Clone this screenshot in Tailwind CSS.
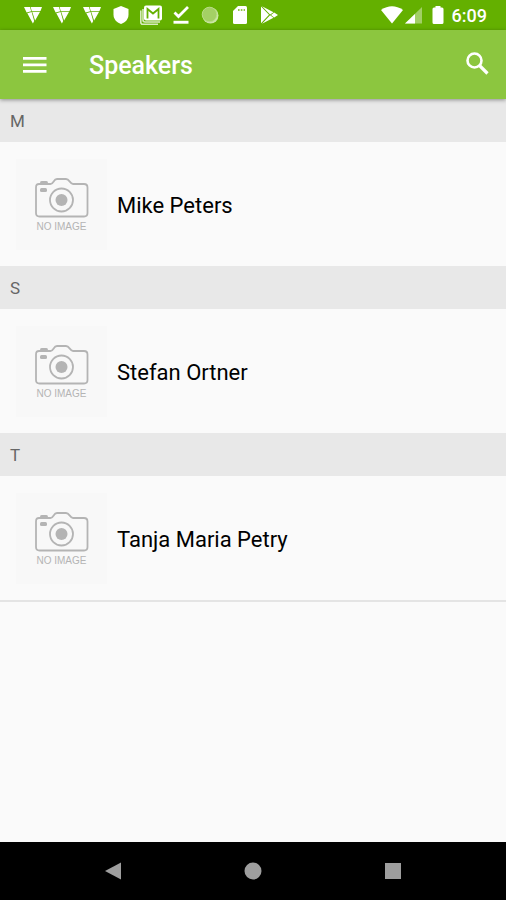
<!DOCTYPE html>
<html lang="en">
<head>
<meta charset="utf-8">
<meta name="viewport" content="width=device-width, initial-scale=1">
<title>Speakers</title>
<script src="https://cdn.jsdelivr.net/npm/@tailwindcss/browser@4"></script>
</head>
<body class="flex min-h-screen flex-col bg-[#fafafa] font-['Roboto',sans-serif] text-black">
<svg class="hidden" aria-hidden="true">
  <symbol id="vee" viewBox="0 0 18 18">
    <path fill="#fff" d="M0 1h6l1.200 4.300-4.600 1.200zM6.700 1H18l-1.500 3.900-8.700.3zM3.300 7.200l4.300-1.300 2.600 9.200-1.300 2.400zM8.300 6l7.800-.3-5 8.900z"/>
  </symbol>
  <symbol id="camera" viewBox="0 0 54 40">
    <g fill="none" stroke="#b4b4b4" stroke-width="1.800">
      <path d="M4 6H15.500C18.500 6 18.500 1 22 1H31C34.500 1 35 6 38 6H49Q52.500 6 52.500 9.500V35Q52.500 38.500 49 38.500H4.500Q1 38.500 1 35V9.500Q1 6 4 6Z"/>
      <path d="M6 5.500V4.500Q6 4 7 4H11Q12 4 12 4.500V5.500"/>
      <circle cx="26.500" cy="22" r="11.500"/>
    </g>
    <circle cx="26.500" cy="22" r="6" fill="#b4b4b4"/>
    <rect x="5" y="10" width="7" height="4" rx="1.500" fill="#b4b4b4"/>
  </symbol>
</svg>

<div class="flex h-[30px] shrink-0 items-center justify-between bg-[#64b000] pr-[19px] pl-[18px] text-white">
  <div class="grid w-[266px] grid-cols-9 place-items-center">
    <svg class="size-[18px]"><use href="#vee"/></svg>
    <svg class="size-[18px]"><use href="#vee"/></svg>
    <svg class="size-[18px]"><use href="#vee"/></svg>
    <svg class="size-[18px]" viewBox="0 0 18 18"><path fill="#fff" d="M9 0l7.500 3v5.500c0 4.500-3 8-7.500 9.500-4.500-1.500-7.500-5-7.500-9.500V3z"/></svg>
    <svg class="h-5 w-6" viewBox="0 0 24 20"><g fill="none" stroke="#fff" stroke-opacity=".75" stroke-width="1.600"><path d="M1.800 5.500v11.700q0 2 2 2H19M4 4v11q0 2 2 2H21"/></g><rect x="5" y=".5" width="18" height="15" rx="2" fill="#fff"/><path fill="none" stroke="#64b000" stroke-width="1.800" d="M8.500 13.500V4L14 8.500 19.500 4V13.500"/></svg>
    <svg class="size-[18px]" viewBox="0 0 18 18"><path fill="none" stroke="#fff" stroke-width="2.800" d="M2.500 6.500l4 4L16 1"/><path fill="#fff" d="M1.500 14.800h15v2.900h-15z"/></svg>
    <svg class="size-[18px]" viewBox="0 0 18 18"><circle cx="9.500" cy="9.500" r="8" fill="#cbe6a4"/><circle cx="8.500" cy="8.500" r="7.300" fill="#a4d065" stroke="#b9dc86" stroke-width="1"/></svg>
    <svg class="size-[18px]" viewBox="0 0 18 18"><path fill="#fff" d="M7 0h7.500Q16 0 16 1.500v15q0 1.500-1.500 1.500h-11Q2 18 2 16.500V5z"/><path fill="#64b000" fill-opacity=".7" d="M7 3h1.600v2H7zM9.800 3h1.600v2H9.800zM12.600 3h1.400v2h-1.400z"/></svg>
    <svg class="size-[18px]" viewBox="0 0 18 18"><path fill="#fff" d="M1 .5l8 8.300L1 17.300zM2 .3l11.500 5.900-3.400 2.300zM2 17.700l8.100-8.400 3.400 2.500zM14.200 6.500L18 9l-3.800 2.500L11 9z"/></svg>
  </div>
  <div class="flex items-center">
    <svg class="h-[18px] w-[22px]" viewBox="0 0 22 18"><path fill="#fff" d="M0 4Q11-3.500 22 4L11 17.500z"/></svg>
    <svg class="ml-0.5 size-[18px]" viewBox="0 0 18 18"><path fill="#fff" fill-opacity=".4" d="M17 1v16.500H0z"/><path fill="#fff" d="M10 8v9.500H0z"/></svg>
    <svg class="ml-[9px] h-[18px] w-3" viewBox="0 0 12 18"><path fill="#fff" d="M3.500 0h5v1.500H10q1.500 0 1.500 1.500v13.500q0 1.500-1.500 1.500H2Q.5 18 .5 16.500V3Q.5 1.500 2 1.500h1.500z"/></svg>
    <time class="ml-2 pt-0.5 text-[18px] leading-7 font-medium">6:09</time>
  </div>
</div>

<header class="relative z-10 flex h-[69px] shrink-0 items-center bg-[#8cc63f] pr-[17px] pl-[23px] text-white shadow-[0_1px_4px_rgba(0,0,0,0.4)]">
  <button type="button" aria-label="Open menu" class="shrink-0">
    <svg class="block h-[18px] w-6" viewBox="0 0 24 18"><path fill="#fff" d="M0 1h23.500v2.700H0zM0 7.500h23.500v2.700H0zM0 14h23.500v2.700H0z"/></svg>
  </button>
  <h1 class="ml-[42px] flex-1 pt-0.5 text-[25px] leading-8 font-medium">Speakers</h1>
  <button type="button" aria-label="Search" class="shrink-0 pb-0.5">
    <svg class="block h-[23px] w-[23px]" viewBox="0 0 23 23"><circle cx="8.500" cy="8.500" r="7" fill="none" stroke="#fff" stroke-width="2.600"/><path stroke="#fff" stroke-width="3.200" d="M13.500 13.500l8 8"/></svg>
  </button>
</header>

<main class="flex-1">
  <section>
    <h2 class="h-[43px] bg-[#e8e8e8] pl-[10px] text-[17px] leading-[45px] text-[#666]">M</h2>
    <a href="#mike-peters" class="flex h-[124px] items-center gap-[10px] pl-4">
      <span class="flex size-[91px] shrink-0 flex-col items-center bg-[#f8f8f8] pt-[19px]">
        <svg class="h-10 w-[54px]"><use href="#camera"/></svg>
        <span class="mt-[3px] font-['Liberation_Sans',sans-serif] text-[10px] leading-3 text-[#b4b4b4]">NO IMAGE</span>
      </span>
      <span class="pt-1 text-[22px] leading-7">Mike Peters</span>
    </a>
  </section>
  <section>
    <h2 class="h-[43px] bg-[#e8e8e8] pl-[10px] text-[17px] leading-[45px] text-[#666]">S</h2>
    <a href="#stefan-ortner" class="flex h-[124px] items-center gap-[10px] pl-4">
      <span class="flex size-[91px] shrink-0 flex-col items-center bg-[#f8f8f8] pt-[19px]">
        <svg class="h-10 w-[54px]"><use href="#camera"/></svg>
        <span class="mt-[3px] font-['Liberation_Sans',sans-serif] text-[10px] leading-3 text-[#b4b4b4]">NO IMAGE</span>
      </span>
      <span class="pt-1 text-[22px] leading-7">Stefan Ortner</span>
    </a>
  </section>
  <section class="border-b-2 border-[#e4e4e4]">
    <h2 class="h-[43px] bg-[#e8e8e8] pl-[10px] text-[17px] leading-[45px] text-[#666]">T</h2>
    <a href="#tanja-maria-petry" class="flex h-[124px] items-center gap-[10px] pl-4">
      <span class="flex size-[91px] shrink-0 flex-col items-center bg-[#f8f8f8] pt-[19px]">
        <svg class="h-10 w-[54px]"><use href="#camera"/></svg>
        <span class="mt-[3px] font-['Liberation_Sans',sans-serif] text-[10px] leading-3 text-[#b4b4b4]">NO IMAGE</span>
      </span>
      <span class="pt-1 text-[22px] leading-7">Tanja Maria Petry</span>
    </a>
  </section>
</main>

<nav aria-label="System" class="flex h-[58px] shrink-0 items-center justify-center gap-[122px] bg-black">
  <button type="button" aria-label="Back"><svg class="block size-[18px]" viewBox="0 0 18 18"><path fill="#9e9e9e" d="M17 .5v17L1 9z"/></svg></button>
  <button type="button" aria-label="Home"><svg class="block size-[18px]" viewBox="0 0 18 18"><circle cx="9" cy="9" r="8.500" fill="#9e9e9e"/></svg></button>
  <button type="button" aria-label="Recent apps"><svg class="block size-[18px]" viewBox="0 0 18 18"><path fill="#9e9e9e" d="M1 1h16v16H1z"/></svg></button>
</nav>
</body>
</html>
